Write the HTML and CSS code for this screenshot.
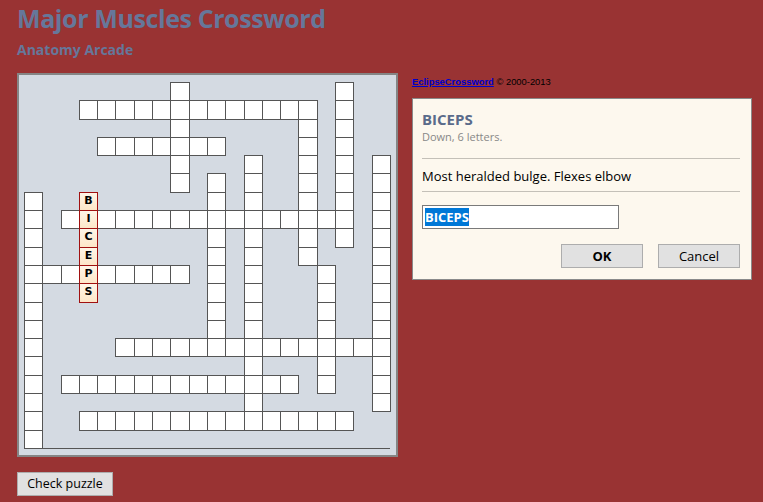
FILE: index.html
```html
<!DOCTYPE html>
<html lang="en">

<head>
    <meta charset="UTF-8">
    <title>Major Muscles Crossword</title>
    <link rel="stylesheet" href="styles.css">
</head>

<body>
    <h1 class="title">Major Muscles Crossword</h1>
    <h2 class="subtitle">Anatomy Arcade</h2>

    <div class="main">
        <div class="board">
            <div class="grid" id="grid"></div>
        </div>

        <div class="side">
            <div class="credit"><a href="#">EclipseCrossword</a> &copy; 2000-2013</div>

            <div class="answer-box">
                <div class="word">BICEPS</div>
                <div class="word-info">Down, 6 letters.</div>
                <hr>
                <div class="clue">Most heralded bulge. Flexes elbow</div>
                <hr>
                <div class="answer-input"><span class="sel">BICEPS</span></div>
                <div class="buttons">
                    <button class="btn btn-ok">OK</button>
                    <button class="btn">Cancel</button>
                </div>
            </div>
        </div>
    </div>

    <button class="btn check-btn">Check puzzle</button>

    <script>
        // '#' = empty square, '.' = blank white square, letters = current word
        const LAYOUT = [
            '########.########.##',
            '###.............#.##',
            '########.######.#.##',
            '####.......####.#.##',
            '########.###.##.#.#.',
            '########.#.#.##.#.#.',
            '.##B######.#.##.#.#.',
            '.#.I..............#.',
            '.##C######.#.##.#.#.',
            '.##E######.#.##.###.',
            '...P.....#.#.###.##.',
            '.##S######.#.###.##.',
            '.#########.#.###.##.',
            '.#########.#.###.##.',
            '.####...............',
            '.###########.###.##.',
            '.#.............#.##.',
            '.###########.######.',
            '.##...............##',
            '.###################'
        ];

        const grid = document.getElementById('grid');
        grid.innerHTML = LAYOUT.map(row => row.split('').map(ch => {
            if (ch === '#') return '<div></div>';
            if (ch === '.') return '<div class="cell"></div>';
            return `<div class="cell active">${ch}</div>`;
        }).join('')).join('');
    </script>
</body>

</html>
```

FILE: styles.css
```css
* {
    box-sizing: border-box
}

body {
    margin: 0;
    padding: 0 0 0 17px;
    background: #993333;
    font-family: 'Open Sans', 'Noto Sans', sans-serif;
    color: #000
}

.title {
    margin: 2px 0 0;
    font-size: 25px;
    line-height: 32px;
    font-weight: 700;
    color: #66779a;
    letter-spacing: -.4px
}

.subtitle {
    margin: 6px 0 0;
    font-size: 14px;
    line-height: 20px;
    font-weight: 700;
    color: #66779a
}

.main {
    display: flex;
    align-items: flex-start;
    gap: 14px;
    margin-top: 13px
}

/* puzzle board */
.board {
    flex-shrink: 0;
    border: 2px solid #858585;
    background: #d4dae2;
    padding: 7px 6px 6px 5px
}

.grid {
    display: grid;
    grid-template-columns: repeat(20, 18.3px);
    grid-auto-rows: 18.3px;
    width: 366px;
    border-bottom: 1px solid #555
}

.cell {
    width: calc(100% + 1px);
    height: calc(100% + 1px);
    background: #fff;
    border: 1px solid #555;
    font-family: 'DejaVu Sans', sans-serif;
    font-size: 11px;
    font-weight: 700;
    line-height: 16px;
    text-align: center
}

.cell.active {
    position: relative;
    z-index: 1;
    background: linear-gradient(#fff6e8, #fde6c8);
    border-color: #a01010
}

/* right column */
.side {
    flex-shrink: 0;
    width: 340px
}

.credit {
    margin-top: 3px;
    font-family: 'Liberation Sans', Arial, sans-serif;
    font-size: 9.4px;
    line-height: 12px
}

.credit a {
    color: #0000cc;
    font-weight: 700
}

.answer-box {
    margin-top: 10px;
    border: 1px solid #8a8a8a;
    background: #fdf8ee;
    padding: 10px 11px 11px 9px
}

.word {
    font-size: 15px;
    line-height: 20px;
    font-weight: 700;
    color: #5a6b8a
}

.word-info {
    font-size: 11px;
    line-height: 16px;
    color: #888
}

.answer-box hr {
    margin: 13px 0 0;
    border: 0;
    border-top: 1px solid #c4c0b8
}

.answer-box hr + .clue {
    margin-top: 8px
}

.clue {
    font-size: 13px;
    line-height: 18px;
    margin-bottom: -5px
}

.clue + hr {
    margin-top: 11px
}

.answer-input {
    margin-top: 13px;
    width: 197px;
    height: 24px;
    border: 1px solid #7a7a7a;
    background: #fff;
    padding: 3px 2px;
    font-size: 13px;
    line-height: 16px;
    font-weight: 700
}

.sel {
    background: #0078d7;
    color: #fff
}

.buttons {
    display: flex;
    justify-content: flex-end;
    gap: 15px;
    margin-top: 15px
}

.btn {
    width: 82px;
    height: 24px;
    padding: 0;
    border: 1px solid #adadad;
    background: #e1e1e1;
    font-family: 'Open Sans', 'Noto Sans', sans-serif;
    font-size: 13px;
    color: #000
}

.btn-ok {
    font-weight: 700
}

.check-btn {
    display: block;
    width: 96px;
    margin-top: 15px;
    font-size: 12.5px
}
```
